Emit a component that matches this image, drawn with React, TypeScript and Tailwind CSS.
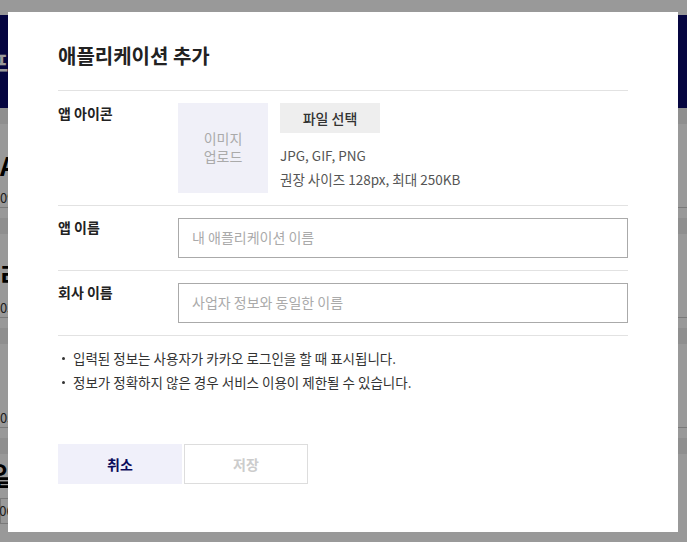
import React from "react";

const font = { fontFamily: '"Noto Sans CJK KR", "Noto Sans", sans-serif' };

function BackgroundPage() {
  const sections = [
    { title: "Android 앱", num: "96" },
    { title: "리소스 관리", num: "30" },
    { title: "", num: "55" },
  ];
  return (
    <div className="w-[687px] h-[542px] bg-white overflow-hidden">
      <div className="h-[15px]" />
      <div className="h-[93px] bg-[#09096b] flex items-center">
        <span className="text-white text-[22px] font-bold -ml-[12px]">프로젝트</span>
      </div>
      {sections.map((s, i) => (
        <div key={i}>
          <div className="h-[16px] bg-[#eeeeee]" />
          <div className="h-[64px] flex items-end pb-[4px]">
            <span className="text-[26px] font-bold text-black">{s.title}</span>
          </div>
          <div className="h-[20px] border-b border-[#cccccc] flex items-center">
            <span className="text-[13px] text-[#333]">0{s.num}</span>
          </div>
          <div className="h-[10px]" />
        </div>
      ))}
      <div className="h-[16px] bg-[#eeeeee]" />
      <div className="h-[40px] flex items-end">
        <span className="text-[26px] font-bold text-black -ml-[8px]">일반</span>
      </div>
      <div className="flex h-[26px] mt-[4px] text-[13px] text-[#333]">
        <div className="w-[23px] border border-[#ccc] flex items-center justify-end pr-[1px]">061</div>
        <div className="w-[58px] ml-[2px] border border-[#ccc] flex items-center justify-center">OWNER</div>
        <div className="w-[58px] ml-[2px] border border-[#ccc] flex items-center justify-center">Android</div>
        <div className="w-[58px] ml-[2px] border border-[#ccc] flex items-center justify-center">Web</div>
      </div>
    </div>
  );
}

export default function App() {
  return (
    <div className="relative w-[687px] h-[542px] overflow-hidden" style={font}>
      <BackgroundPage />
      <div className="absolute inset-0 bg-black/40" />
      <div className="absolute left-[8px] top-[12px] w-[670px] h-[520px] bg-white px-[50px] pt-[29px]">
        <h2 className="text-[20px] font-bold text-[#222] leading-[30px]">애플리케이션 추가</h2>
        <div className="mt-[19px] border-t border-[#e2e2e2]">
          <div className="flex py-[12px] border-b border-[#e2e2e2]">
            <div className="w-[120px] text-[14px] font-bold text-[#222] leading-[20px]">앱 아이콘</div>
            <div className="w-[90px] h-[90px] bg-[#f0f0f8] flex flex-col items-center justify-center text-[14px] leading-[18px] text-[#aaa] pb-[2px]">
              <span>이미지</span>
              <span>업로드</span>
            </div>
            <div className="ml-[12px] flex flex-col">
              <button className="w-[100px] h-[30px] bg-[#eeeeee] text-[14px] font-medium text-[#333]">파일 선택</button>
              <p className="mt-[10px] text-[13.5px] leading-[24px] text-[#555]">JPG, GIF, PNG</p>
              <p className="text-[13.5px] leading-[24px] text-[#555]">권장 사이즈 128px, 최대 250KB</p>
            </div>
          </div>
          <div className="flex py-[12px] border-b border-[#e2e2e2]">
            <div className="w-[120px] text-[14px] font-bold text-[#222] leading-[20px] -mt-[1px]">앱 이름</div>
            <input
              placeholder="내 애플리케이션 이름"
              className="flex-1 h-[40px] border border-[#aaaaaa] px-[13px] pb-[2px] text-[14px] text-[#333] placeholder-[#aaa] outline-none"
            />
          </div>
          <div className="flex py-[12px] border-b border-[#e2e2e2]">
            <div className="w-[120px] text-[14px] font-bold text-[#222] leading-[20px] -mt-[1px]">회사 이름</div>
            <input
              placeholder="사업자 정보와 동일한 이름"
              className="flex-1 h-[40px] border border-[#aaaaaa] px-[13px] pb-[2px] text-[14px] text-[#333] placeholder-[#aaa] outline-none"
            />
          </div>
        </div>
        <ul className="mt-[10px] text-[13.5px] leading-[24px] text-[#333]">
          <li className="flex items-center">
            <span className="w-[3px] h-[3px] bg-[#333] rounded-full ml-[4px] mr-[8px]" />
            입력된 정보는 사용자가 카카오 로그인을 할 때 표시됩니다.
          </li>
          <li className="flex items-center">
            <span className="w-[3px] h-[3px] bg-[#333] rounded-full ml-[4px] mr-[8px]" />
            정보가 정확하지 않은 경우 서비스 이용이 제한될 수 있습니다.
          </li>
        </ul>
        <div className="mt-[50px] flex gap-[2px]">
          <button className="w-[124px] h-[40px] bg-[#f0f0fa] text-[14px] font-bold text-[#0a0a5a]">취소</button>
          <button className="w-[124px] h-[40px] border border-[#dddddd] text-[14px] font-bold text-[#cccccc]">저장</button>
        </div>
      </div>
    </div>
  );
}
